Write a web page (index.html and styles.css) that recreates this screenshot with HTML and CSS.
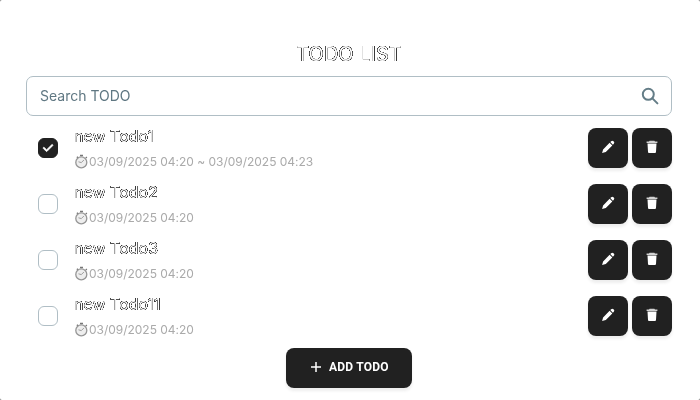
FILE: index.html
```html
<!DOCTYPE html>
<html lang="en">
<head>
<meta charset="utf-8">
<title>TODO LIST</title>
<link rel="stylesheet" href="styles.css">
</head>
<body>
<svg class="defs" width="0" height="0" aria-hidden="true">
  <symbol id="pencil" viewBox="0 0 14 14"><path d="M9.3 2.1 10.2 1.2a1.6 1.6 0 0 1 2.2 0l.4.4a1.6 1.6 0 0 1 0 2.2l-.9.9zM8.6 2.8l2.7 2.7-6.5 6.6-3.7 1 1-3.7z"/></symbol>
  <symbol id="trash" viewBox="0 0 14 14"><path d="M4.6 .8h4.8l.6 .7h2.4v1.6H1.6V1.5H4z" opacity=".8"/><path d="M2.5 3.6h9l-.5 8.4a1 1 0 0 1-1 .9H4a1 1 0 0 1-1-.9z"/></symbol>
  <symbol id="watch" viewBox="0 0 15 15"><path d="M6 .8h3v1.5H6zM2.4 3.3l1-1 1.3 1.3-1 1zM11.3 3.6l1-1 1 1-1 1z" fill="#777"/><circle cx="7.3" cy="8.4" r="5.5" fill="#eee" stroke="#969696" stroke-width="1.3"/><path d="M7.3 8.6 9.9 6M7.3 8.6 4.5 7.8" fill="none" stroke="#888" stroke-width=".8"/></symbol>
</svg>
<main class="app">
  <h1 class="title">TODO LIST</h1>
  <div class="search">
    <span>Search TODO</span>
    <svg class="search-icon" viewBox="0 0 18 18"><circle cx="7.3" cy="7.3" r="5.5"/><path d="m11.4 11.4 5 5"/></svg>
  </div>
  <ul class="list">
    <li class="item">
      <span class="check checked"><svg viewBox="0 0 20 20"><path d="M16.707 5.293a1 1 0 0 1 0 1.414l-8 8a1 1 0 0 1-1.414 0l-4-4a1 1 0 0 1 1.414-1.414L8 12.586l7.293-7.293a1 1 0 0 1 1.414 0z"/></svg></span>
      <div class="info"><p class="name">new Todo1</p><p class="date"><svg><use href="#watch"/></svg>03/09/2025 04:20 ~ 03/09/2025 04:23</p></div>
      <button class="btn"><svg class="pencil"><use href="#pencil"/></svg></button><button class="btn"><svg class="trash"><use href="#trash"/></svg></button>
    </li>
    <li class="item">
      <span class="check"></span>
      <div class="info"><p class="name">new Todo2</p><p class="date"><svg><use href="#watch"/></svg>03/09/2025 04:20</p></div>
      <button class="btn"><svg class="pencil"><use href="#pencil"/></svg></button><button class="btn"><svg class="trash"><use href="#trash"/></svg></button>
    </li>
    <li class="item">
      <span class="check"></span>
      <div class="info"><p class="name">new Todo3</p><p class="date"><svg><use href="#watch"/></svg>03/09/2025 04:20</p></div>
      <button class="btn"><svg class="pencil"><use href="#pencil"/></svg></button><button class="btn"><svg class="trash"><use href="#trash"/></svg></button>
    </li>
    <li class="item">
      <span class="check"></span>
      <div class="info"><p class="name">new Todo11</p><p class="date"><svg><use href="#watch"/></svg>03/09/2025 04:20</p></div>
      <button class="btn"><svg class="pencil"><use href="#pencil"/></svg></button><button class="btn"><svg class="trash"><use href="#trash"/></svg></button>
    </li>
  </ul>
  <button class="add"><svg viewBox="0 0 12 12"><path d="M6 1v10M1 6h10"/></svg><span>ADD TODO</span></button>
</main>
</body>
</html>
```

FILE: styles.css
```css
* { box-sizing: border-box; margin: 0; padding: 0; }
html { background: #777; }
body { font-family: Inter, "Liberation Sans", sans-serif; }
.defs { display: block; }
.app {
  height: 400px;
  padding: 40px 28px 0 26px;
  background: #fff;
  border-radius: 2px;
  display: flex;
  flex-direction: column;
  overflow: hidden;
}
.title, .name, .date, .search span, .add span { will-change: transform; }
.title, .name {
  color: #fff;
  text-shadow: 0 0 #000, 0 0 #000, 0 0 #000, 0 0 #000, 0 0 #000, 0 0 #000, 0 0 #000, 0 0 #000,
    0 0 #000, 0 0 #000, 0 0 #000, 0 0 #000, 0 0 #000, 0 0 #000, 0 0 #000, 0 0 #000,
    0 0 #000, 0 0 #000, 0 0 #000, 0 0 #000, 0 0 #000, 0 0 #000, 0 0 #000, 0 0 #000;
}
.title {
  font-size: 20px;
  font-weight: 400;
  line-height: 28px;
  height: 36px;
  text-align: center;
}
.search {
  height: 40px;
  border: 1px solid #b0bec5;
  border-radius: 7px;
  padding: 0 12px 0 13px;
  display: flex;
  align-items: center;
  justify-content: space-between;
  color: #607d8b;
  font-size: 14px;
}
.search span { padding-bottom: 2px; color: #5f7782; }
.search-icon {
  width: 18px;
  height: 18px;
  fill: none;
  stroke: #647d87;
  stroke-width: 2;
  stroke-linecap: round;
}
.list { list-style: none; padding: 4px 0; }
.item { height: 56px; display: flex; align-items: center; }
.check {
  width: 20px;
  height: 20px;
  margin: 0 16px 0 12px;
  border: 1px solid #b0bec5;
  border-radius: 6px;
  display: flex;
  align-items: center;
  justify-content: center;
}
.checked { background: #212121; border-color: #212121; }
.check svg { width: 14px; height: 14px; fill: #fff; stroke: #fff; }
.info { flex: 1; height: 44px; }
.name { font-size: 16px; line-height: 20px; }
.date {
  display: flex;
  align-items: center;
  color: #aaa;
  font-size: 12px;
  line-height: 16px;
  margin-top: 8px;
  letter-spacing: -0.02px;
}
.date svg { width: 15px; height: 15px; margin-bottom: 1px; }
.btn, .add {
  border: 0;
  border-radius: 8px;
  background: #212121;
  color: #fff;
  box-shadow: 0 3px 3px rgba(33, 33, 33, 0.08);
}
.btn {
  width: 40px;
  height: 40px;
  margin-left: 4px;
  display: flex;
  align-items: center;
  justify-content: center;
  fill: #fff;
}
.btn svg { width: 14px; height: 14px; margin-bottom: 3px; }
.add {
  width: 126px;
  height: 40px;
  align-self: center;
  flex: none;
  display: flex;
  align-items: center;
  justify-content: center;
  gap: 7px;
  padding-bottom: 3px;
  font: 700 12px Roboto, sans-serif;
  letter-spacing: 0.22px;
}
.add svg { width: 12px; height: 12px; fill: none; stroke: #fff; stroke-width: 1.5; }
```
